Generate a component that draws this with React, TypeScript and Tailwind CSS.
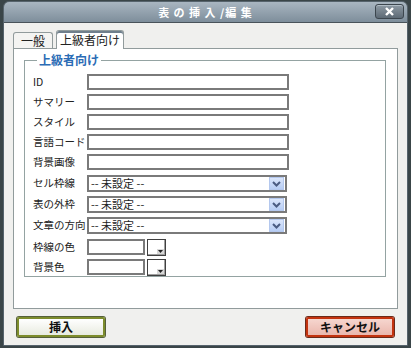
import React from 'react';

const font = { fontFamily: '"MS UI Gothic", "Noto Sans CJK JP", sans-serif' };

const textFields = ['ID', 'サマリー', 'スタイル', '言語コード', '背景画像'];
const selectFields = ['セル枠線', '表の外枠', '文章の方向'];
const colorFields = ['枠線の色', '背景色'];

const Label = ({ text }: { text: string }) => (
    <div className="w-[54px] shrink-0 whitespace-nowrap text-[10.5px] leading-none text-[#222]">{text}</div>
);

const SelectBox = () => (
    <div className="flex h-[17px] w-[200px] items-center border-2 border-[#7a7a7a] bg-white">
        <span className="flex-1 pl-[2px] text-[11px] leading-none text-[#222]">-- 未設定 --</span>
        <div className="mr-[1px] flex h-[13px] w-[15px] items-center justify-center border border-[#b4c8ee] bg-gradient-to-b from-[#dbe6fb] to-[#b7cdf4]">
            <svg width="9" height="6" viewBox="0 0 9 6">
                <path d="M1 1 L4.5 4.5 L8 1" stroke="#4b5c82" strokeWidth="2" fill="none" />
            </svg>
        </div>
    </div>
);

const ColorPick = () => (
    <div className="relative ml-[2px] h-[17px] w-[19px] border border-[#404040] bg-white shadow-[inset_-1px_-1px_0_#a0a0a0]">
        <svg className="absolute bottom-[1px] right-[1px]" width="7" height="5" viewBox="0 0 7 5">
            <path d="M0 0 H7 V5 H0 Z" fill="#d8d8d8" />
            <path d="M1 1 H6 L3.5 4 Z" fill="#222" />
        </svg>
    </div>
);

export default function App() {
    return (
        <div className="h-[348px] w-[411px] overflow-hidden bg-[#3a4548]" style={font}>
            <div className="ml-[3px] mt-[1px] flex h-[345px] w-[405px] flex-col overflow-hidden rounded-t-[6px] border border-[#56636c]">
                {/* title bar */}
                <div className="relative flex h-[21px] shrink-0 items-center justify-center border-b border-[#49535a] bg-gradient-to-b from-[#a9b6c1] to-[#7e8e9b]">
                    <span className="text-[11px] font-bold tracking-[1px] text-white">表 の 挿 入 /編 集</span>
                    <div className="absolute right-[3px] top-[2px] flex h-[15px] w-[29px] items-center justify-center rounded-[3px] border border-[#3c464e] bg-gradient-to-b from-[#8e9aa4] to-[#5d6a75] shadow-[inset_0_1px_0_#b0bcc5]">
                        <svg width="9" height="9" viewBox="0 0 9 9">
                            <path d="M1 1 L8 8 M8 1 L1 8" stroke="#fff" strokeWidth="2.4" />
                        </svg>
                    </div>
                </div>

                {/* body */}
                <div className="flex flex-1 flex-col bg-[#f0f0ee] px-[9px] pt-[7px]">
                    <div className="flex items-end gap-[3px]">
                        <div className="flex h-[16px] w-[40px] items-center justify-center rounded-t-[3px] border border-b-0 border-[#919b9c] bg-[#f4f4f2] text-[12px] text-[#222]">一般</div>
                        <div className="relative -mb-px flex h-[19px] w-[68px] items-center justify-center rounded-t-[3px] border border-b-0 border-[#919b9c] bg-white text-[12px] text-[#222] shadow-[inset_0_2px_0_#6f7f8c]">上級者向け</div>
                    </div>
                    <div className="h-[261px] w-[385px] border border-[#919b9c] bg-white px-[10px] pt-[5px]">
                        <fieldset className="h-[223px] w-[362px] border border-[#94a3a2] pl-[8px]">
                            <legend className="ml-[4px] px-[2px] text-[12px] font-bold leading-none text-[#2b6cb5]">上級者向け</legend>
                            <div className="mt-[6px] flex flex-col">
                                {textFields.map(t => (
                                    <div key={t} className="flex h-[20px] items-center">
                                        <Label text={t} />
                                        <div className="h-[16px] w-[202px] border-2 border-[#7a7a7a] bg-white" />
                                    </div>
                                ))}
                                <div className="mt-[1px] flex flex-col">
                                    {selectFields.map(t => (
                                        <div key={t} className="flex h-[21px] items-center">
                                            <Label text={t} />
                                            <SelectBox />
                                        </div>
                                    ))}
                                </div>
                                <div className="mt-[1px] flex flex-col">
                                    {colorFields.map(t => (
                                        <div key={t} className="flex h-[20px] items-center">
                                            <Label text={t} />
                                            <div className="h-[16px] w-[58px] border-2 border-[#7a7a7a] bg-white" />
                                            <ColorPick />
                                        </div>
                                    ))}
                                </div>
                            </div>
                        </fieldset>
                    </div>
                    <div className="mt-[8px] flex justify-between px-[4px]">
                        <button className="flex h-[20px] w-[88px] items-center justify-center rounded-[2px] border-2 border-[#7d8c2c] bg-gradient-to-b from-[#ffffff] to-[#e8ebe0] text-[12px] font-bold text-[#111] shadow-[0_0_0_1px_#55603a]">挿入</button>
                        <button className="flex h-[20px] w-[88px] items-center justify-center rounded-[2px] border-2 border-[#c3330f] bg-gradient-to-b from-[#f6d6cf] to-[#eab7ad] text-[12px] font-bold text-[#111] shadow-[0_0_0_1px_#6b2a1a]">キャンセル</button>
                    </div>
                </div>
            </div>
        </div>
    );
}
